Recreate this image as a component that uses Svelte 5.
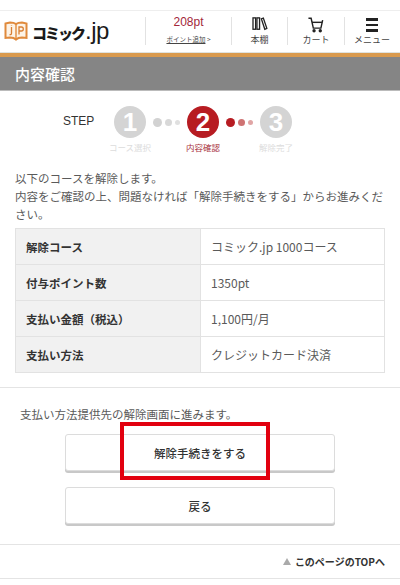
<script>
    const steps = [
        { num: 1, label: 'コース選択' },
        { num: 2, label: '内容確認', active: true },
        { num: 3, label: '解除完了' }
    ];
    const rows = [
        ['解除コース', 'コミック.jp 1000コース'],
        ['付与ポイント数', '1350pt'],
        ['支払い金額（税込）', '1,100円/月'],
        ['支払い方法', 'クレジットカード決済']
    ];
</script>

<div class="page">
    <header class="header">
        <div class="logo">
            <svg width="24" height="20" viewBox="0 0 24 20" fill="none">
                <path d="M1.5 2.5 L6 1.5 Q10 1.5 12 3 Q14 1.5 18 1.5 L22.5 2.5 V17 L18 16.5 Q14 16.5 12 18.5 Q10 16.5 6 16.5 L1.5 17 Z" stroke="#e08a3c" stroke-width="2" fill="#fdf3e6"/>
                <path d="M12 3 V18" stroke="#e08a3c" stroke-width="1.4"/>
                <path d="M7.5 6 V12 Q7.5 14 5.5 13.6 M7.5 4.2 V4.8" stroke="#d97f33" stroke-width="1.3"/>
                <path d="M15 13.5 V6 H17.5 Q19.3 6 19.3 8 Q19.3 10 17.5 10 H15" stroke="#d97f33" stroke-width="1.3"/>
            </svg>
            <span class="logo-text">コミック<span class="logo-jp">.jp</span></span>
        </div>
        <div class="points nav-item">
            <span class="pt">208pt</span>
            <span class="add"><u>ポイント追加</u> &gt;</span>
        </div>
        <div class="nav-item shelf">
            <svg width="16" height="14" viewBox="0 0 18 16" fill="none" stroke="#222" stroke-width="1.5">
                <rect x="1" y="1" width="3" height="13"/>
                <rect x="5.5" y="1" width="3" height="13"/>
                <path d="M10.5 2 L12.8 1.2 L16.8 13 L14.5 14 Z"/>
            </svg>
            <span>本棚</span>
        </div>
        <div class="nav-item cart">
            <svg width="16" height="16" viewBox="0 0 18 18" fill="none" stroke="#222" stroke-width="1.6">
                <path d="M0.5 1.5 H3.5 L6 12.5 H14.5 L16.5 3.5"/>
                <path d="M4.5 6 H16"/>
                <circle cx="6.8" cy="15.5" r="1.1" fill="#222"/>
                <circle cx="13.8" cy="15.5" r="1.1" fill="#222"/>
            </svg>
            <span>カート</span>
        </div>
        <div class="nav-item menu">
            <div class="burger"><i></i><i></i><i></i></div>
            <span>メニュー</span>
        </div>
    </header>

    <h1 class="title">内容確認</h1>

    <div class="steps">
        <span class="step-word">STEP</span>
        {#each steps as step, i (step.num)}
            <div class="step" class:active={step.active}>
                <div class="circle">{step.num}</div>
                <span class="step-label">{step.label}</span>
            </div>
            {#if i < steps.length - 1}
                <div class="dots" class:red={step.active}><i></i><i></i><i></i></div>
            {/if}
        {/each}
    </div>

    <p class="intro">以下のコースを解除します。<br />内容をご確認の上、問題なければ「解除手続きをする」からお進みください。</p>

    <table class="info">
        <tbody>
            {#each rows as row (row[0])}
                <tr>
                    <th>{row[0]}</th>
                    <td>{row[1]}</td>
                </tr>
            {/each}
        </tbody>
    </table>

    <section class="actions">
        <p class="note">支払い方法提供先の解除画面に進みます。</p>
        <div class="btn-wrap">
            <button class="btn">解除手続きをする</button>
            <div class="highlight"></div>
        </div>
        <button class="btn">戻る</button>
    </section>

    <div class="to-top"><span class="tri"></span>このページのTOPへ</div>
</div>

<style>
    :global(body) {
        margin: 0;
        background: #fff;
    }

    .page {
        width: 400px;
        height: 585px;
        overflow: hidden;
        font-family: "Noto Sans CJK JP", "Liberation Sans", sans-serif;
        color: #444;
    }

    .header {
        display: flex;
        align-items: center;
        height: 40px;
        margin-top: 10px;
        padding-bottom: 1px;
        border-top: 1px solid #eee;
        border-bottom: 1px solid #dfe3e0;
        box-sizing: content-box;
    }

    .logo {
        width: 145px;
        display: flex;
        align-items: center;
        gap: 4px;
        padding-left: 4px;
        box-sizing: border-box;
    }

    .logo-text {
        font-size: 15px;
        font-weight: 900;
        color: #1a1a1a;
        letter-spacing: -2px;
        line-height: 1;
        white-space: nowrap;
    }

    .logo-jp {
        font-family: "Liberation Sans", sans-serif;
        font-size: 24px;
        font-weight: 400;
        letter-spacing: -0.5px;
        margin-left: 1px;
    }

    .nav-item {
        display: flex;
        flex-direction: column;
        align-items: center;
        justify-content: space-between;
        height: 28px;
        border-left: 1px solid #e2e2e2;
        font-size: 9px;
        line-height: 10px;
        color: #444;
        white-space: nowrap;
        box-sizing: border-box;
    }

    .points {
        width: 86px;
    }

    .pt {
        font-family: "Liberation Sans", sans-serif;
        font-size: 12px;
        line-height: 14px;
        margin-top: -2px;
        color: #a3273a;
    }

    .add {
        font-size: 6.5px;
        margin-bottom: 1px;
    }

    .shelf {
        width: 56px;
    }

    .cart {
        width: 57px;
    }

    .menu {
        width: 55px;
    }

    .burger {
        display: flex;
        flex-direction: column;
        gap: 3px;
        margin-top: 1px;
    }

    .burger i {
        display: block;
        width: 12px;
        height: 2.5px;
        background: #222;
    }

    .title {
        margin: 0;
        line-height: 34px;
        padding-left: 15px;
        background: #858585;
        border-top: 4px solid #d99a4e;
        border-bottom: 1px solid #bbb;
        font-size: 15px;
        font-weight: 500;
        color: #fff;
        box-sizing: content-box;
        height: 33px;
    }

    .steps {
        display: flex;
        align-items: flex-start;
        height: 60px;
        padding: 15px 0 0 63px;
        margin-bottom: 3px;
    }

    .step-word {
        width: 51px;
        font-family: "Liberation Sans", sans-serif;
        font-size: 12px;
        line-height: 30px;
        color: #333;
    }

    .step {
        position: relative;
        width: 32px;
    }

    .circle {
        width: 32px;
        height: 32px;
        border-radius: 50%;
        background: #d4d4d4;
        color: #fff;
        font-family: "Liberation Sans", sans-serif;
        font-size: 26px;
        font-weight: 700;
        line-height: 32px;
        text-align: center;
    }

    .active .circle {
        background: #b71c22;
    }

    .step-label {
        position: absolute;
        top: 35px;
        left: 50%;
        transform: translateX(-50%);
        font-size: 8.5px;
        line-height: 12px;
        white-space: nowrap;
        color: #dcdcdc;
    }

    .active .step-label {
        color: #a8323c;
    }

    .dots {
        display: flex;
        align-items: center;
        justify-content: center;
        gap: 3px;
        width: 41px;
        height: 32px;
    }

    .dots i {
        display: block;
        border-radius: 50%;
        background: #d2d2d2;
        width: 9px;
        height: 9px;
    }

    .dots i:nth-child(2) {
        width: 7px;
        height: 7px;
        background: #d8d8d8;
    }

    .dots i:nth-child(3) {
        width: 5px;
        height: 5px;
        background: #e0e0e0;
    }

    .dots.red i {
        background: #b71c22;
    }

    .dots.red i:nth-child(2) {
        background: #cf7373;
    }

    .dots.red i:nth-child(3) {
        background: #e0a5a5;
    }

    .intro {
        margin: 0 15px 5px;
        font-size: 11.5px;
        line-height: 18px;
        color: #5a5a5a;
    }

    .info {
        width: 370px;
        margin: 0 15px;
        border-collapse: collapse;
        font-size: 11.5px;
    }

    .info th,
    .info td {
        height: 36px;
        padding: 0 10px;
        border: 1px solid #e2e2e2;
        box-sizing: border-box;
        text-align: left;
    }

    .info th {
        width: 185px;
        background: #f1f1f1;
        font-weight: 700;
        color: #333;
    }

    .info td {
        font-size: 12px;
        color: #5a5a5a;
    }

    .actions {
        margin-top: 14px;
        padding-top: 17px;
        height: 158px;
        box-sizing: border-box;
        border-top: 1px solid #e4e4e4;
        border-bottom: 1px solid #e4e4e4;
        display: flex;
        flex-direction: column;
        align-items: center;
    }

    .note {
        align-self: flex-start;
        margin: 0 0 11px 20px;
        font-size: 11.5px;
        line-height: 18px;
        color: #5a5a5a;
    }

    .btn-wrap {
        position: relative;
        margin-bottom: 16px;
    }

    .btn {
        display: block;
        width: 270px;
        height: 37px;
        padding: 0;
        background: #fff;
        border: 1px solid #dcdcdc;
        border-radius: 3px;
        box-shadow: 0 2px 0 #c8c8c8;
        font-family: inherit;
        font-size: 11.5px;
        font-weight: 500;
        color: #333;
    }

    .highlight {
        position: absolute;
        left: 55px;
        top: -12px;
        width: 150px;
        height: 58px;
        box-sizing: border-box;
        border: 4px solid #e2000f;
    }

    .to-top {
        display: flex;
        align-items: center;
        justify-content: flex-end;
        height: 33px;
        padding-right: 15px;
        border-bottom: 1px solid #e4e4e4;
        font-size: 10px;
        font-weight: 700;
        color: #333;
    }

    .tri {
        width: 0;
        height: 0;
        margin-right: 4px;
        border-left: 4px solid transparent;
        border-right: 4px solid transparent;
        border-bottom: 7px solid #aaa;
    }
</style>
